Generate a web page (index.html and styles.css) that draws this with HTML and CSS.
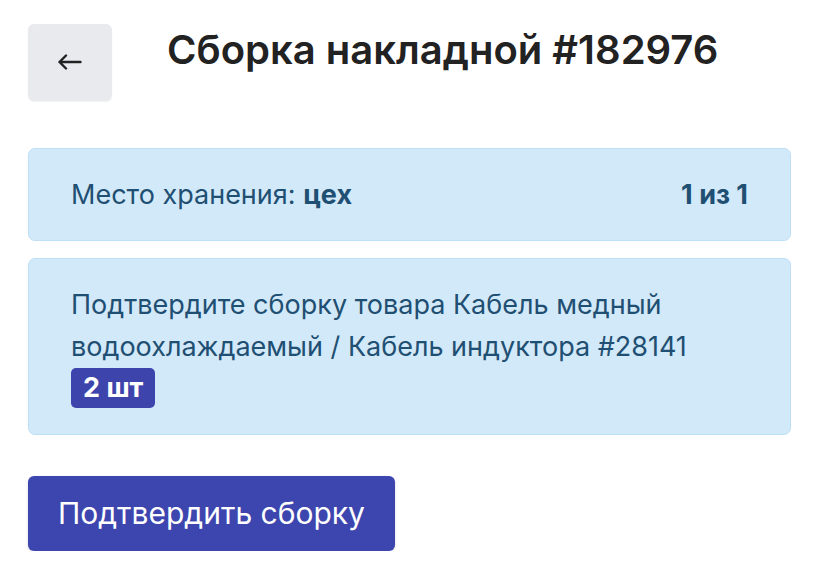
FILE: index.html
```html
<!DOCTYPE html>
<html lang="ru">
<head>
    <meta charset="UTF-8">
    <meta name="viewport" content="width=device-width, initial-scale=1.0">
    <title>Сборка накладной #182976</title>
    <link rel="stylesheet" href="styles.css">
</head>
<body>
    <div class="page">
        <header class="top">
            <button class="back" aria-label="Назад">
                <svg width="24" height="24" viewBox="0 0 24 24" fill="none" stroke="#222" stroke-width="2.4" stroke-linecap="round" stroke-linejoin="round">
                    <path d="M22.5 12H1.5M8 5.5L1.5 12l6.5 6.5"/>
                </svg>
            </button>
            <h1>Сборка накладной #182976</h1>
        </header>

        <div class="alert row">
            <span>Место хранения: <b>цех</b></span>
            <b>1 из 1</b>
        </div>

        <div class="alert">
            Подтвердите сборку товара Кабель медный водоохлаждаемый / Кабель индуктора #28141
            <br>
            <span class="badge">2 шт</span>
        </div>

        <button class="confirm">Подтвердить сборку</button>
    </div>
</body>
</html>
```

FILE: styles.css
```css
body {
    margin: 0;
    font-family: Inter, "Noto Sans", sans-serif;
    background: #fff;
    color: #212529;
}
.page {
    width: 763px;
    padding: 24px 0 0 28px;
}
.top {
    display: flex;
    align-items: flex-start;
    gap: 55px;
    margin-bottom: 47px;
}
.back {
    width: 84px;
    height: 77px;
    border: none;
    border-radius: 6px;
    background: #e9eaee;
    box-shadow: 0 1px 2px rgba(0, 0, 0, 0.06);
    display: flex;
    align-items: center;
    justify-content: center;
    padding: 0 0 2px 0;
}
h1 {
    margin: 0;
    font-size: 40px;
    line-height: 52px;
    font-weight: 600;
    color: #222;
}
.alert {
    background: #d2e9f9;
    border: 1px solid #bde0f8;
    border-radius: 7px;
    padding: 25px 42px 24px;
    color: #1f4f72;
    font-size: 27px;
    line-height: 42px;
    margin-bottom: 17px;
}
.alert b {
    font-weight: 700;
}
.row {
    display: flex;
    justify-content: space-between;
}
.badge {
    display: inline-flex;
    align-items: center;
    height: 40px;
    background: #3d45ad;
    color: #fff;
    font-weight: 700;
    font-size: 27px;
    padding: 0 12px;
    border-radius: 5px;
    vertical-align: top;
}
.confirm {
    margin-top: 24px;
    background: #3d45ae;
    color: #fff;
    border: none;
    border-radius: 6px;
    font-family: inherit;
    font-size: 30px;
    line-height: 48px;
    padding: 13px 30px 14px;
    box-shadow: 0 1px 3px rgba(0, 0, 0, 0.15);
}
```
